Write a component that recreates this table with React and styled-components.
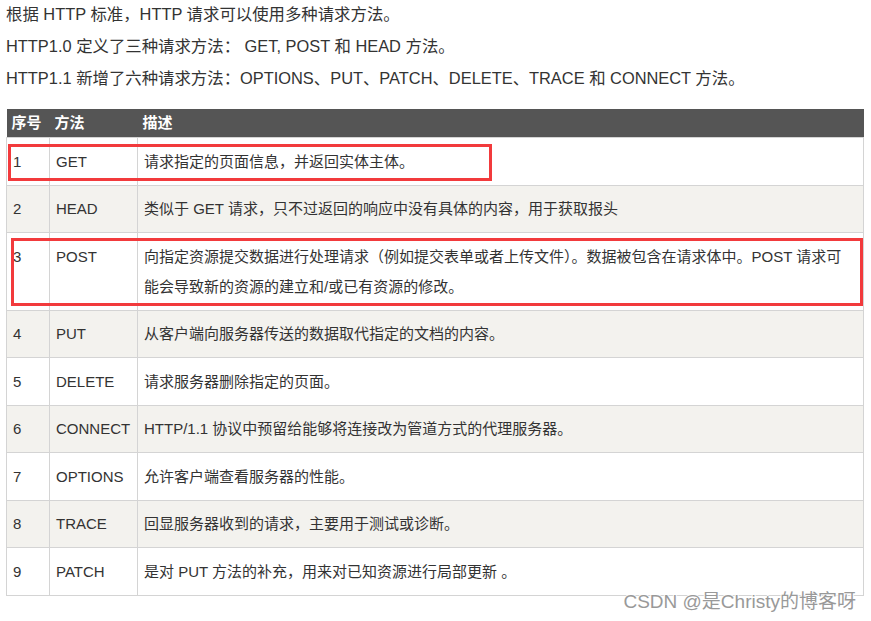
import React from 'react';
import styled, { createGlobalStyle } from 'styled-components';

const GlobalStyle = createGlobalStyle`
  body {
    margin: 0;
    background: #fff;
    font-family: "Liberation Sans", "Noto Sans CJK SC", sans-serif;
    color: #333;
  }
`;

const Page = styled.div`
  position: relative;
  width: 871px;
  height: 621px;
  padding: 0 7px 0 6px;
  box-sizing: border-box;
  overflow: hidden;
`;

const Para = styled.p`
  margin: 0 0 4px;
  font-size: 16.4px;
  line-height: 28px;
  white-space: nowrap;
`;

const TableWrap = styled.div`
  position: relative;
  margin-top: 17px;
  width: 858px;
`;

const Table = styled.table`
  width: 858px;
  border-collapse: collapse;
  table-layout: fixed;
  font-size: 15px;
`;

const HeadCell = styled.th`
  background: #555555;
  color: #fff;
  font-weight: bold;
  text-align: left;
  height: 28px;
  line-height: 28px;
  padding: 0 5px;
  border: none;
`;

const Row = styled.tr`
  background: ${p => (p.$shaded ? '#f3f2ee' : '#fff')};
`;

const Cell = styled.td`
  border: 1px solid #d4d4d4;
  padding: 8.5px 6px 8px;
  line-height: 30px;
  vertical-align: top;
  white-space: ${p => (p.$wrap ? 'normal' : 'nowrap')};
`;

const Highlight = styled.div`
  position: absolute;
  left: ${p => p.$left}px;
  top: ${p => p.$top}px;
  width: ${p => p.$width}px;
  height: ${p => p.$height}px;
  border: 3px solid #f23a3c;
  box-sizing: border-box;
  pointer-events: none;
`;

const Watermark = styled.div`
  position: absolute;
  right: 15px;
  bottom: 8px;
  font-size: 19px;
  line-height: 22px;
  color: #999;
  text-shadow: 1px 0 0 #fff, -1px 0 0 #fff, 0 1px 0 #fff, 0 -1px 0 #fff;
  white-space: nowrap;
`;

const methods = [
  ['1', 'GET', '请求指定的页面信息，并返回实体主体。'],
  ['2', 'HEAD', '类似于 GET 请求，只不过返回的响应中没有具体的内容，用于获取报头'],
  ['3', 'POST', (
    <>
      向指定资源提交数据进行处理请求（例如提交表单或者上传文件）。数据被包含在请求体中。POST 请求可<br />
      能会导致新的资源的建立和/或已有资源的修改。
    </>
  )],
  ['4', 'PUT', '从客户端向服务器传送的数据取代指定的文档的内容。'],
  ['5', 'DELETE', '请求服务器删除指定的页面。'],
  ['6', 'CONNECT', 'HTTP/1.1 协议中预留给能够将连接改为管道方式的代理服务器。'],
  ['7', 'OPTIONS', '允许客户端查看服务器的性能。'],
  ['8', 'TRACE', '回显服务器收到的请求，主要用于测试或诊断。'],
  ['9', 'PATCH', '是对 PUT 方法的补充，用来对已知资源进行局部更新 。'],
];

export default function App() {
  return (
    <Page>
      <GlobalStyle />
      <Para>根据 HTTP 标准，HTTP 请求可以使用多种请求方法。</Para>
      <Para>HTTP1.0 定义了三种请求方法： GET, POST 和 HEAD 方法。</Para>
      <Para>HTTP1.1 新增了六种请求方法：OPTIONS、PUT、PATCH、DELETE、TRACE 和 CONNECT 方法。</Para>
      <TableWrap>
        <Table>
          <colgroup>
            <col style={{ width: 43 }} />
            <col style={{ width: 88 }} />
            <col />
          </colgroup>
          <thead>
            <tr>
              <HeadCell>序号</HeadCell>
              <HeadCell>方法</HeadCell>
              <HeadCell>描述</HeadCell>
            </tr>
          </thead>
          <tbody>
            {methods.map(([n, name, desc], i) => (
              <Row key={n} $shaded={i % 2 === 1}>
                <Cell>{n}</Cell>
                <Cell>{name}</Cell>
                <Cell $wrap>{desc}</Cell>
              </Row>
            ))}
          </tbody>
        </Table>
        <Highlight $left={2} $top={35} $width={484} $height={37} />
        <Highlight $left={5} $top={129} $width={852} $height={68} />
      </TableWrap>
      <Watermark>CSDN @是Christy的博客呀</Watermark>
    </Page>
  );
}
